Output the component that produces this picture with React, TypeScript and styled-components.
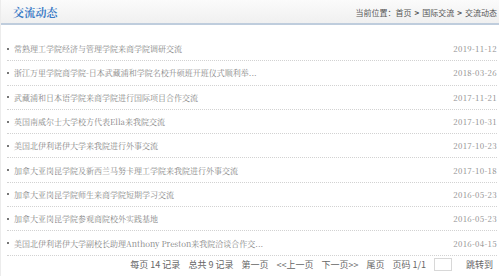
import styled, { createGlobalStyle } from 'styled-components';

const GlobalStyle = createGlobalStyle`
  html, body {
    margin: 0;
    padding: 0;
    background: #fff;
  }
  body {
    font-family: 'Noto Sans CJK SC', 'Noto Sans', sans-serif;
  }
`;

const Page = styled.div`
  width: 499px;
  height: 276px;
  box-sizing: border-box;
  border-left: 1px solid #ececec;
  display: flex;
  flex-direction: column;
  overflow: hidden;
`;

const Header = styled.div`
  height: 23px;
  flex-shrink: 0;
  display: flex;
  align-items: center;
  justify-content: space-between;
  padding: 0 2px 0 12px;
  background: linear-gradient(#fbfbfb, #f0f0f0);
  border-bottom: 2px solid #bfcddd;
`;

const Title = styled.h2`
  margin: 0;
  font-family: 'Noto Serif CJK SC', 'Noto Sans CJK SC', serif;
  font-size: 11px;
  font-weight: 700;
  color: #3b7bc6;
  letter-spacing: 0.2px;
`;

const Crumbs = styled.div`
  font-size: 8px;
  color: #555;
  padding-top: 2px;

  span {
    margin: 0 3px;
    font-weight: 700;
  }
`;

const List = styled.ul`
  list-style: none;
  margin: 0;
  padding: 12px 2px 0 6px;
`;

const Row = styled.li`
  height: 24.3px;
  box-sizing: border-box;
  display: flex;
  align-items: center;
  justify-content: space-between;
  border-bottom: 1px dotted #d2d2d2;
  font-family: 'Noto Serif CJK SC', 'Noto Sans CJK SC', serif;
  font-size: 8px;
  color: #868686;
`;

const Link = styled.span`
  display: flex;
  align-items: center;
  gap: 5px;
  white-space: nowrap;

  &::before {
    content: '';
    width: 2px;
    height: 2px;
    background: #777;
  }
`;

const Date = styled.span`
  color: #8a8a8a;
  letter-spacing: 0.3px;
`;

const Pager = styled.div`
  flex: 1;
  display: flex;
  align-items: center;
  justify-content: flex-end;
  gap: 8px;
  padding: 0 6px 2px 0;
  font-size: 9px;
  color: #666;
`;

const JumpInput = styled.input`
  width: 18px;
  height: 13px;
  box-sizing: border-box;
  border: 1px solid #d8d8d8;
  padding: 0;
  margin: 0 6px 0 0;
  outline: none;
`;

const NEWS = [
  ['常熟理工学院经济与管理学院来商学院调研交流', '2019-11-12'],
  ['浙江万里学院商学院-日本武藏浦和学院名校升硕班开班仪式顺利举...', '2018-03-26'],
  ['武藏浦和日本语学院来商学院进行国际项目合作交流', '2017-11-21'],
  ['英国南威尔士大学校方代表Ella来我院交流', '2017-10-31'],
  ['美国北伊利诺伊大学来我院进行外事交流', '2017-10-23'],
  ['加拿大亚岗昆学院及新西兰马努卡理工学院来我院进行外事交流', '2017-10-18'],
  ['加拿大亚岗昆学院师生来商学院短期学习交流', '2016-05-23'],
  ['加拿大亚岗昆学院参观商院校外实践基地', '2016-05-23'],
  ['美国北伊利诺伊大学副校长助理Anthony Preston来我院洽谈合作交...', '2016-04-15'],
];

export default function App() {
  return (
    <Page>
      <GlobalStyle />
      <Header>
        <Title>交流动态</Title>
        <Crumbs>
          当前位置：首页<span>&gt;</span>国际交流<span>&gt;</span>交流动态
        </Crumbs>
      </Header>
      <List>
        {NEWS.map(([title, date]) => (
          <Row key={title}>
            <Link>{title}</Link>
            <Date>{date}</Date>
          </Row>
        ))}
      </List>
      <Pager>
        <span>每页 14 记录</span>
        <span>总共 9 记录</span>
        <span>第一页</span>
        <span>&lt;&lt;上一页</span>
        <span>下一页&gt;&gt;</span>
        <span>尾页</span>
        <span>页码 1/1</span>
        <JumpInput />
        <span>跳转到</span>
      </Pager>
    </Page>
  );
}
